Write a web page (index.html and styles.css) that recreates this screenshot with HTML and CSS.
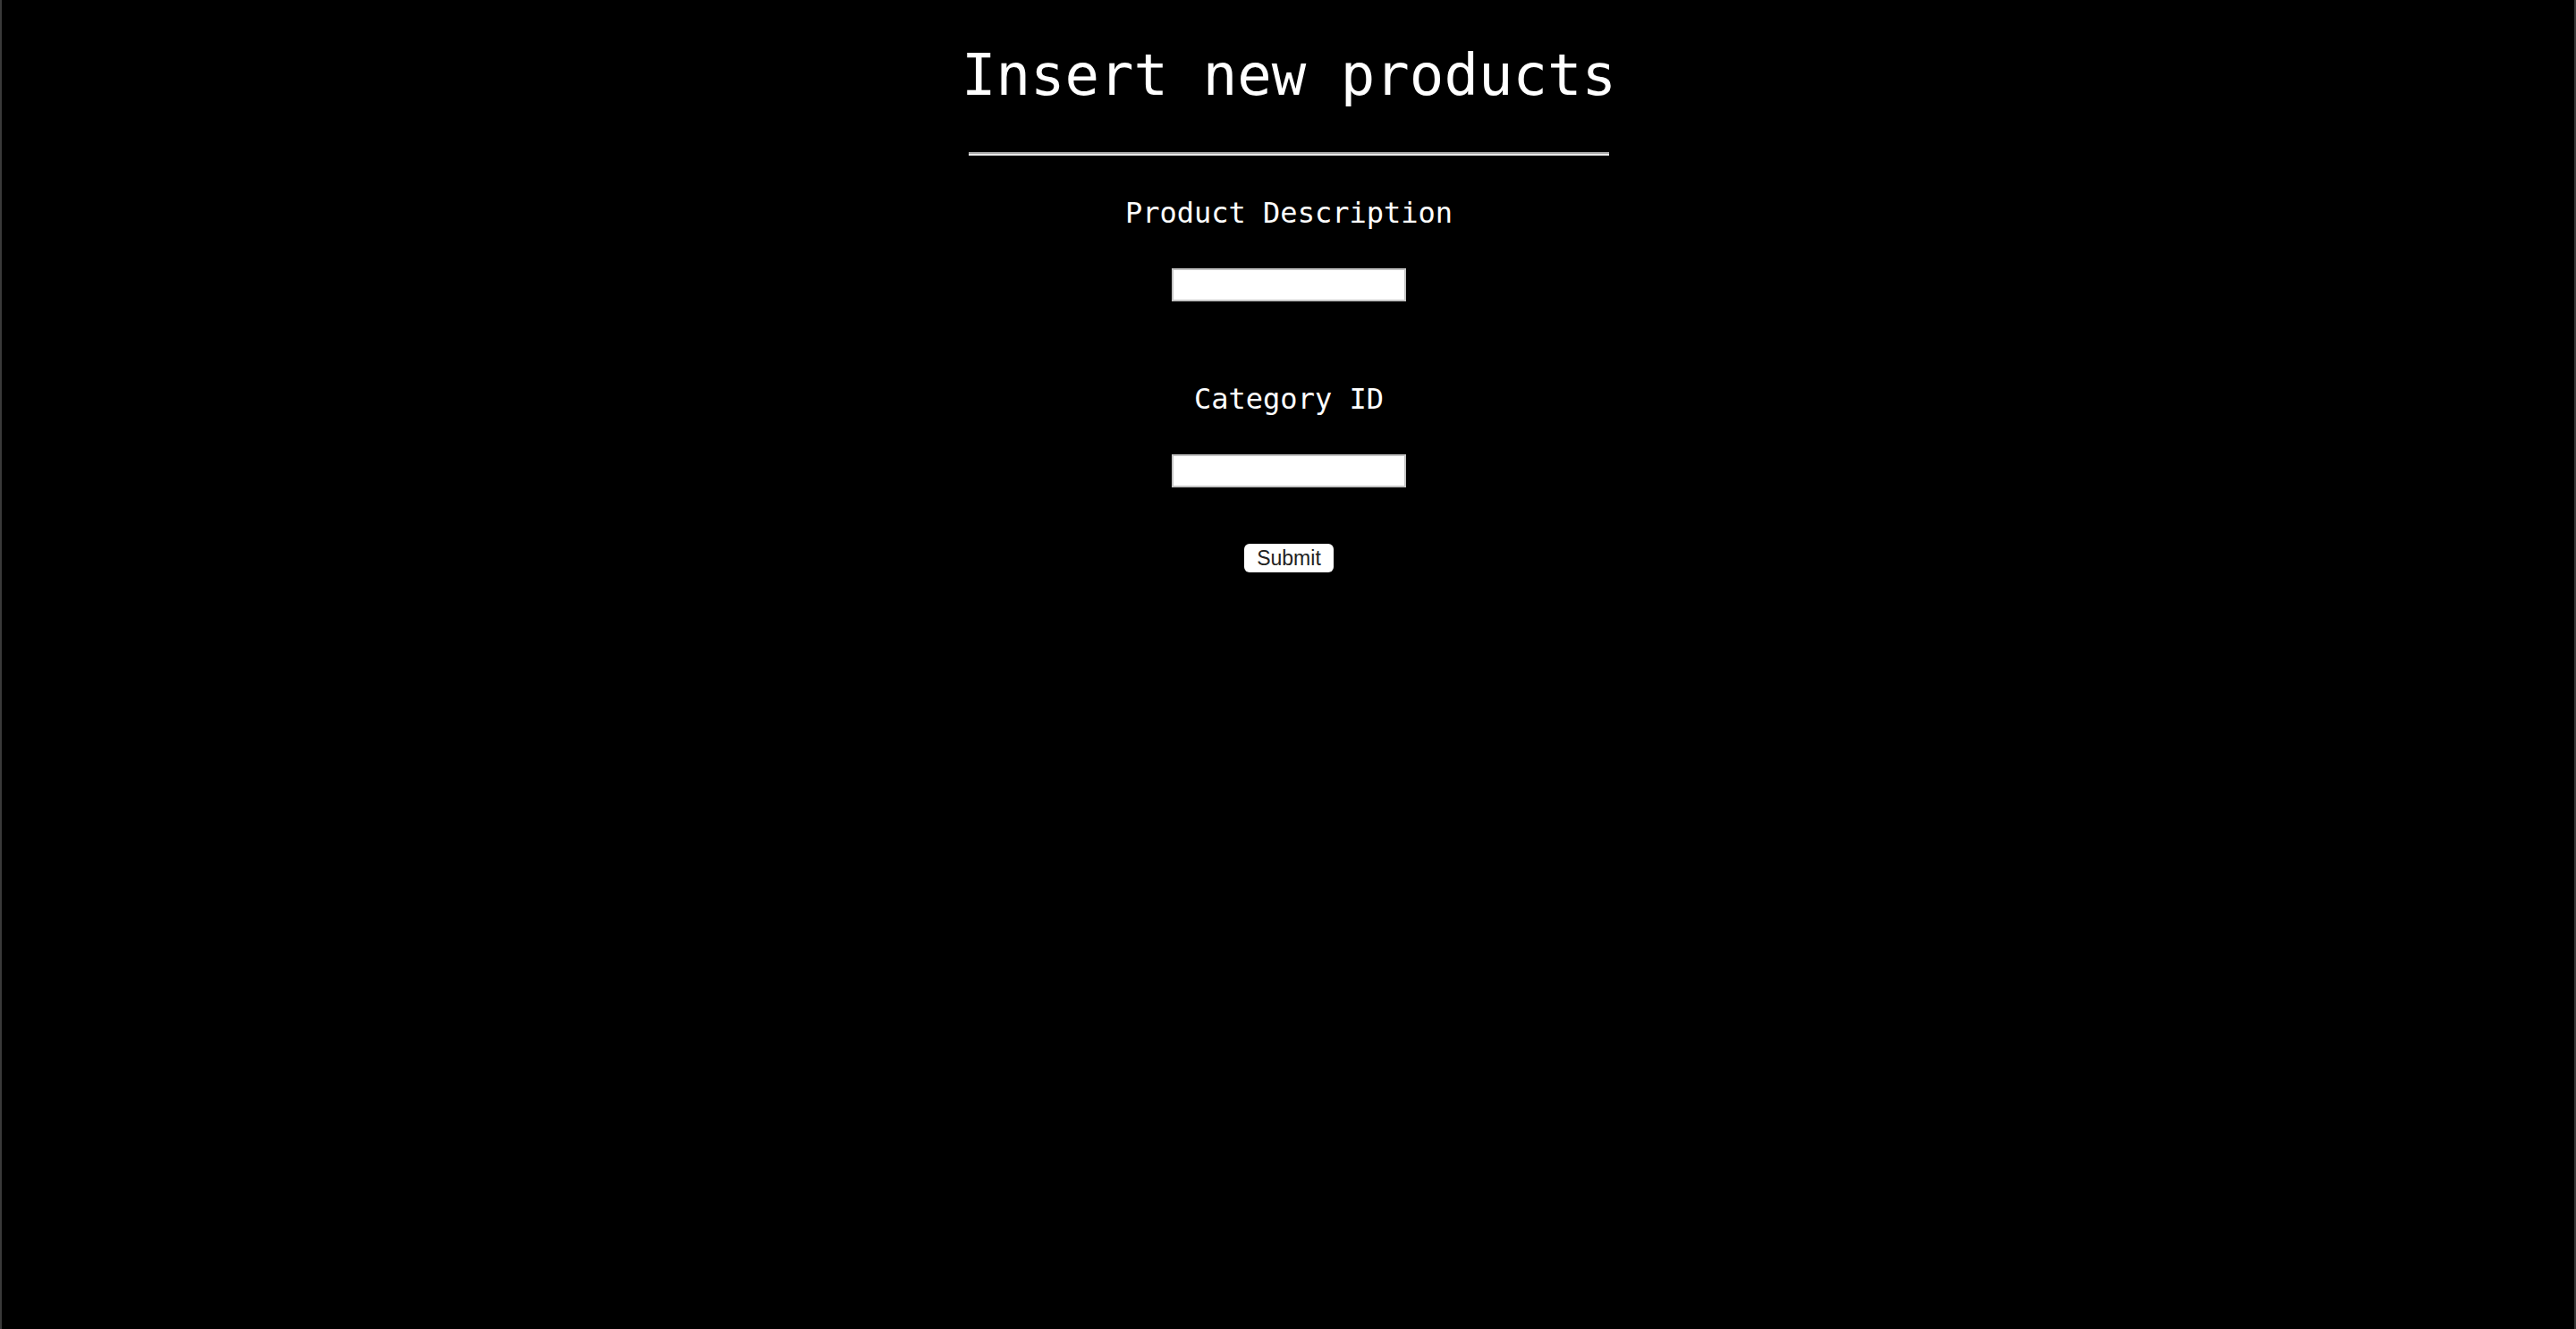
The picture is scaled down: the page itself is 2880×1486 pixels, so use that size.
FILE: index.html
```html
<!DOCTYPE html>
<html lang="en">
<head>
<meta charset="utf-8">
<title>Insert new products</title>
<link rel="stylesheet" href="styles.css">
</head>
<body>
<main class="page">
  <h1 class="title">Insert new products</h1>
  <div class="rule"></div>
  <form class="form">
    <label class="label" for="desc">Product Description</label>
    <input class="field" id="desc" type="text">
    <label class="label label-second" for="cat">Category ID</label>
    <input class="field" id="cat" type="text">
    <button class="submit" type="button">Submit</button>
  </form>
</main>
</body>
</html>
```
FILE: styles.css
```css
html, body {
  margin: 0;
  padding: 0;
  background: #000;
}
body {
  min-height: 100vh;
  box-sizing: border-box;
  border-left: 2px solid #3a3a3a;
  box-shadow: inset -2px 0 0 #3a3a3a;
}
.page {
  display: flex;
  flex-direction: column;
  align-items: center;
  padding-top: 47px;
  color: #fff;
  font-family: "DejaVu Sans Mono", "Liberation Mono", monospace;
}
.title {
  margin: 0;
  font-size: 64px;
  font-weight: normal;
  line-height: normal;
}
.rule {
  width: 716px;
  height: 0;
  margin-top: 49px;
  border-top: 2px solid #a8a8a8;
  border-bottom: 2px solid #ececec;
}
.form {
  display: flex;
  flex-direction: column;
  align-items: center;
  margin-top: 45px;
}
.label {
  font-size: 32px;
  line-height: normal;
}
.label-second {
  margin-top: 90px;
}
.field {
  box-sizing: border-box;
  width: 262px;
  height: 37px;
  margin-top: 43px;
  background: #fff;
  border: 2px solid #c4c4c4;
  padding: 0;
}
.submit {
  margin-top: 63px;
  width: 100px;
  height: 32px;
  background: #fff;
  color: #222;
  border: none;
  border-radius: 6px;
  font-family: "Liberation Sans", Arial, sans-serif;
  font-size: 23px;
  line-height: 32px;
  padding: 0;
}
```
